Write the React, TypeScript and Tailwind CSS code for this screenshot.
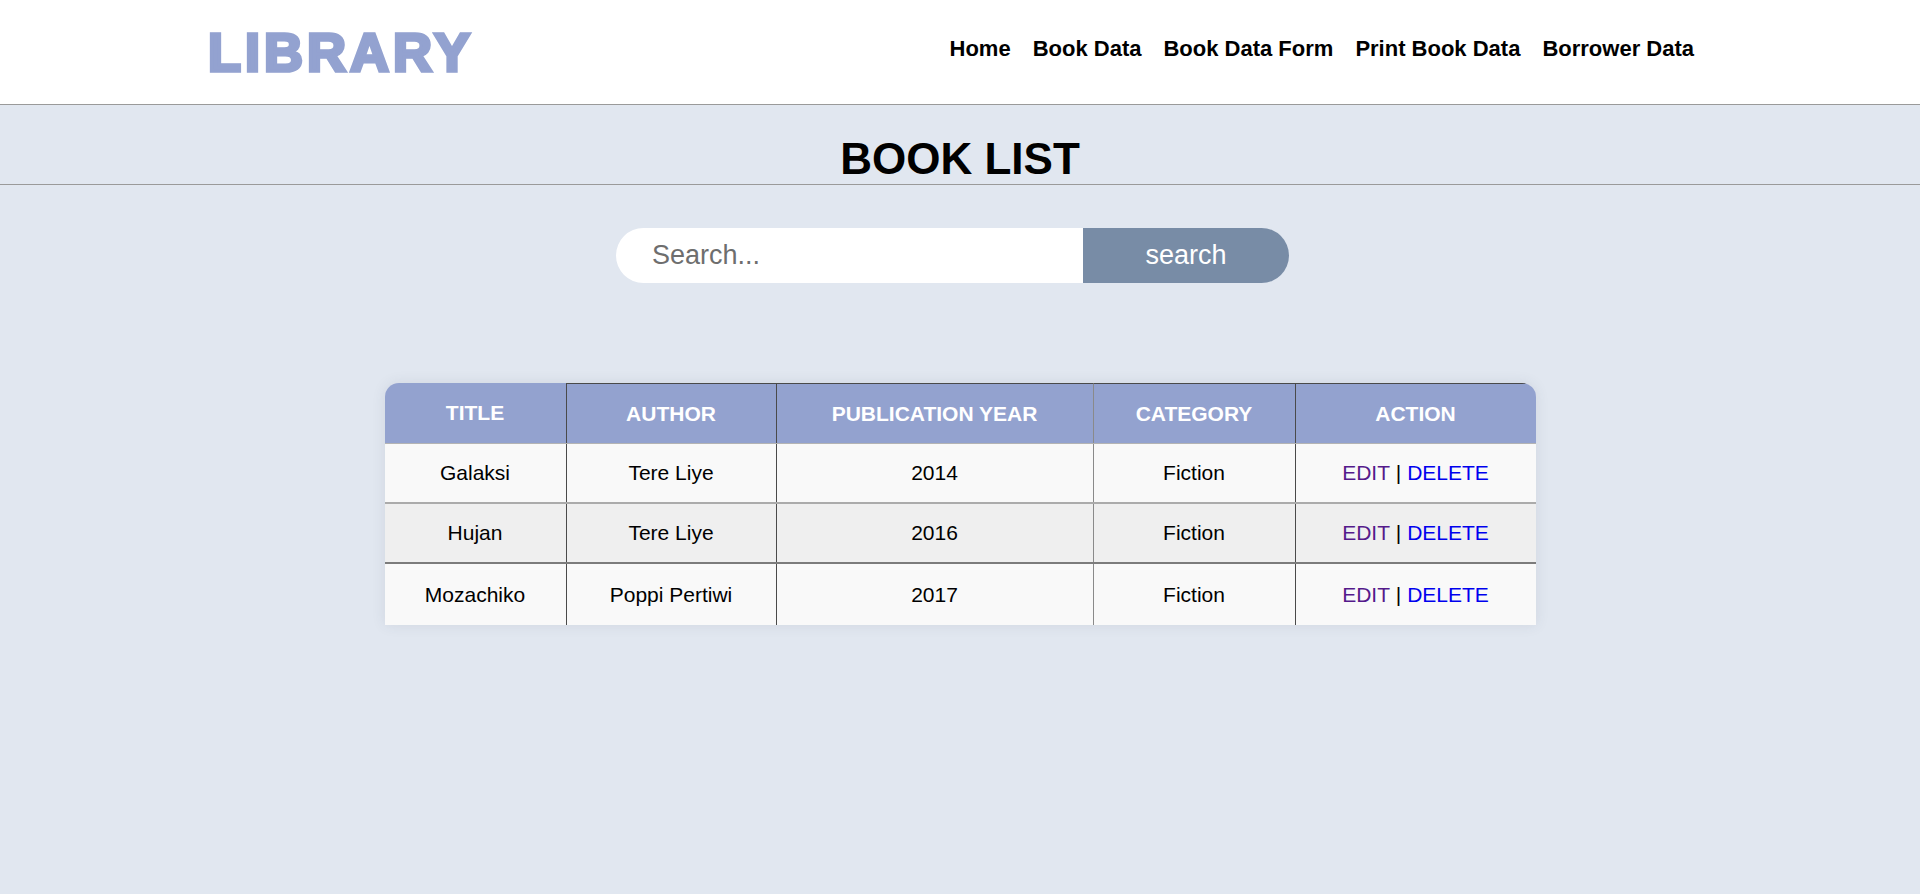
import React from "react";

type Book = {
  title: string;
  author: string;
  year: string;
  category: string;
};

const books: Book[] = [
  { title: "Galaksi", author: "Tere Liye", year: "2014", category: "Fiction" },
  { title: "Hujan", author: "Tere Liye", year: "2016", category: "Fiction" },
  { title: "Mozachiko", author: "Poppi Pertiwi", year: "2017", category: "Fiction" },
];

const navItems = ["Home", "Book Data", "Book Data Form", "Print Book Data", "Borrower Data"];

const cols = "grid grid-cols-[182px_210px_317px_202px_240px]";

export default function App() {
  return (
    <div className="min-h-screen bg-[#e1e7f0] font-['Liberation_Sans',Arial,sans-serif] text-black">
      {/* Header */}
      <header className="flex h-[105px] items-center justify-between border-b border-[#9a9a9a] bg-white pl-[208px] pr-[226px]">
        <h1 className="text-[54px] font-bold leading-none tracking-[4px] text-[#93a2d0] [-webkit-text-stroke:3.5px_#93a2d0]">
          LIBRARY
        </h1>
        <nav className="flex gap-[22px] pb-[7px]">
          {navItems.map((item) => (
            <a key={item} href="#" className="text-[22px] font-bold text-black">
              {item}
            </a>
          ))}
        </nav>
      </header>

      {/* Title */}
      <div className="border-b border-[#9a9a9a] pt-[29px]">
        <h2 className="text-center text-[44px] font-bold leading-[50px]">BOOK LIST</h2>
      </div>

      {/* Search */}
      <form
        className="mt-[43px] flex justify-center pr-[15px]"
        onSubmit={(e) => e.preventDefault()}
      >
        <input
          type="text"
          placeholder="Search..."
          className="h-[55px] w-[467px] rounded-l-full bg-white pl-[36px] text-[27px] text-black outline-none placeholder:text-[#6e6e6e]"
        />
        <button
          type="submit"
          className="h-[55px] w-[206px] rounded-r-full bg-[#788ca6] text-[27px] text-white"
        >
          search
        </button>
      </form>

      {/* Table */}
      <div className="mt-[100px] flex justify-center">
        <div className="w-[1151px] overflow-hidden rounded-t-[14px] shadow-[0_0_14px_rgba(60,70,90,0.1)]">
          <div className={`${cols} h-[61px] border-b border-[#b4b4b4] bg-[#93a2cf] text-[21px] font-bold text-white`}>
            <div className="flex items-center justify-center border-r border-[#4a4a4a]">TITLE</div>
            <div className="flex items-center justify-center border-r border-t border-[#4a4a4a]">AUTHOR</div>
            <div className="flex items-center justify-center border-r border-t border-[#4a4a4a] border-r-[#8a8a8a]">PUBLICATION YEAR</div>
            <div className="flex items-center justify-center border-r border-t border-[#4a4a4a]">CATEGORY</div>
            <div className="flex items-center justify-center border-t border-[#4a4a4a]">ACTION</div>
          </div>
          {books.map((b, i) => (
            <div
              key={b.title}
              className={`${cols} text-[21px] ${
                i === 0
                  ? "h-[60px] border-b-2 border-[#ababab] bg-[#f9f9f9]"
                  : i === 1
                    ? "h-[60px] border-b-2 border-[#7c7c7c] bg-[#efefef]"
                    : "h-[61px] bg-[#f9f9f9]"
              }`}
            >
              <div className="flex items-center justify-center border-r border-[#4a4a4a]">{b.title}</div>
              <div className="flex items-center justify-center border-r border-[#4a4a4a]">{b.author}</div>
              <div className="flex items-center justify-center border-r border-[#8a8a8a]">{b.year}</div>
              <div className="flex items-center justify-center border-r border-[#4a4a4a]">{b.category}</div>
              <div className="flex items-center justify-center whitespace-pre">
                <a href="#" className="text-[#551a8b]">EDIT</a>
                <span> | </span>
                <a href="#" className="text-[#0000ee]">DELETE</a>
              </div>
            </div>
          ))}
        </div>
      </div>
    </div>
  );
}
